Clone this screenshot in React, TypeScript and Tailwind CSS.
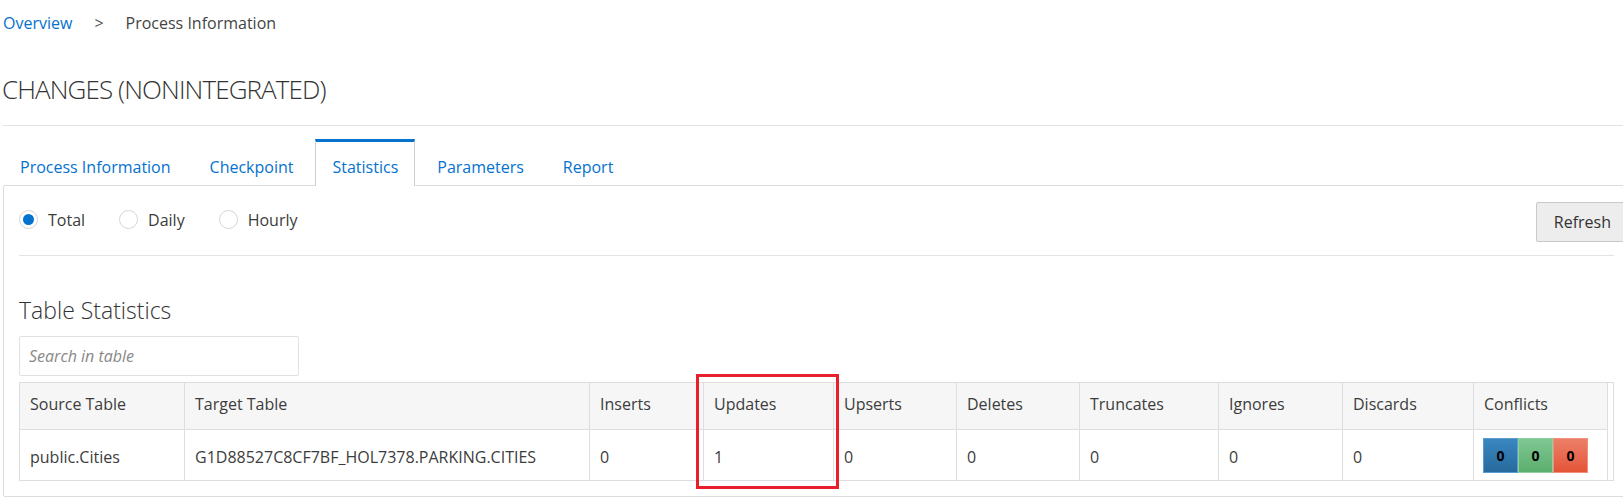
import { useState } from "react"

const columns = [
    { label: "Source Table", w: "w-[164px]" },
    { label: "Target Table", w: "w-[405px]" },
    { label: "Inserts", w: "w-[114px]" },
    { label: "Updates", w: "w-[130px]" },
    { label: "Upserts", w: "w-[123px]" },
    { label: "Deletes", w: "w-[123px]" },
    { label: "Truncates", w: "w-[139px]" },
    { label: "Ignores", w: "w-[124px]" },
    { label: "Discards", w: "w-[131px]" },
    { label: "Conflicts", w: "w-[135px]" },
]

const row = ["public.Cities", "G1D88527C8CF7BF_HOL7378.PARKING.CITIES", "0", "1", "0", "0", "0", "0", "0"]

const tabs = ["Process Information", "Checkpoint", "Statistics", "Parameters", "Report"]

function Radio({ label, checked, onClick }) {
    return (
        <button type="button" onClick={onClick} className="flex items-center gap-[10px] mr-[34px] cursor-pointer">
            <span className="w-[19px] h-[19px] rounded-full border border-[#d6d6d6] bg-white flex items-center justify-center">
                {checked && <span className="w-[11px] h-[11px] rounded-full bg-[#0572ce]" />}
            </span>
            <span className="text-[#3c3c3c]">{label}</span>
        </button>
    )
}

function Badge({ tone }) {
    return (
        <span className={`w-[35px] h-[35px] flex items-center justify-center text-[14px] font-bold text-black border ${tone}`}>0</span>
    )
}

export default function App() {
    const [mode, setMode] = useState("Total")

    return (
        <div className="w-[1623px] h-[501px] overflow-hidden bg-white text-[16px] text-[#3c3c3c] font-['Open_Sans',sans-serif]">
            <nav className="flex items-center h-[24px] mt-[11px] ml-[3px]">
                <a href="#" className="text-[#0572ce]">Overview</a>
                <span className="mx-[22px] text-[#555]">&gt;</span>
                <span className="text-[#444]">Process Information</span>
            </nav>

            <h1 className="ml-[2px] mt-[36px] h-[36px] leading-[36px] text-[26px] font-light text-[#333] tracking-[-0.9px]">CHANGES (NONINTEGRATED)</h1>

            <div className="ml-[3px] mt-[18px] border-t border-[#e3e3e3] w-[1700px]" />

            <div className="ml-[3px] mt-[13px] flex gap-[5px] h-[46px] items-stretch">
                {tabs.map((t) => (
                    <div key={t} className={`px-[16px] pt-[5px] flex items-center border-x -mb-px ${t === "Statistics" ? "border-[#cfcfcf] border-t-[3px] border-t-[#0572ce] bg-white z-10" : "border-transparent border-t-[3px] border-t-transparent"} text-[#0572ce]`}>
                        {t}
                    </div>
                ))}
            </div>

            <div className="ml-[3px] w-[1700px] border border-[#dcdcdc] rounded-[2px] pl-[15px] pb-[15px]">
                <div className="flex items-center h-[70px] pb-[2px] w-[1595px] border-b border-[#e3e3e3]">
                    {["Total", "Daily", "Hourly"].map((m) => (
                        <Radio key={m} label={m} checked={mode === m} onClick={() => setMode(m)} />
                    ))}
                    <button type="button" className="ml-auto mr-[-15px] mt-[4px] h-[40px] px-[17px] bg-[#ededed] border border-[#c9c9c9] rounded-[2px] text-[#333]">Refresh</button>
                </div>

                <h2 className="mt-[38px] h-[32px] leading-[32px] text-[23px] font-light text-[#333]">Table Statistics</h2>

                <input type="text" placeholder="Search in table" className="mt-[10px] block w-[280px] h-[40px] px-[9px] border border-[#e0e0e0] rounded-[2px] italic placeholder:text-[#888] outline-none" />

                <div className="relative mt-[6px] w-[1595px] border border-[#dedede]">
                    <table className="table-fixed border-separate border-spacing-0 w-[1588px]">
                        <thead>
                            <tr className="bg-[#f6f6f6]">
                                {columns.map((c, i) => (
                                    <th key={c.label} className={`${c.w} h-[47px] px-[10px] pb-[4px] text-left font-normal border-b border-[#dedede] ${i > 0 ? "border-l" : ""} ${i === columns.length - 1 ? "border-r" : ""}`}>
                                        {c.label}
                                    </th>
                                ))}
                            </tr>
                        </thead>
                        <tbody>
                            <tr>
                                {row.map((v, i) => (
                                    <td key={i} className={`h-[50px] px-[10px] pt-[4px] ${i > 0 ? "border-l border-[#dedede]" : ""}`}>{v}</td>
                                ))}
                                <td className="h-[50px] px-[9px] border-l border-r border-[#dedede]">
                                    <div className="flex">
                                        <Badge tone="bg-gradient-to-b from-[#3a87c0] to-[#276a9c] border-[#5a9bd0]" />
                                        <Badge tone="bg-gradient-to-b from-[#80c693] to-[#5baf6e] border-[#8fd0a0]" />
                                        <Badge tone="bg-gradient-to-b from-[#ec7f68] to-[#e45437] border-[#f0907a]" />
                                    </div>
                                </td>
                            </tr>
                        </tbody>
                    </table>
                    <div className="absolute left-[676px] top-[-9px] w-[143px] h-[115px] border-[3px] border-[#e8202a] pointer-events-none" />
                </div>
            </div>
        </div>
    )
}
